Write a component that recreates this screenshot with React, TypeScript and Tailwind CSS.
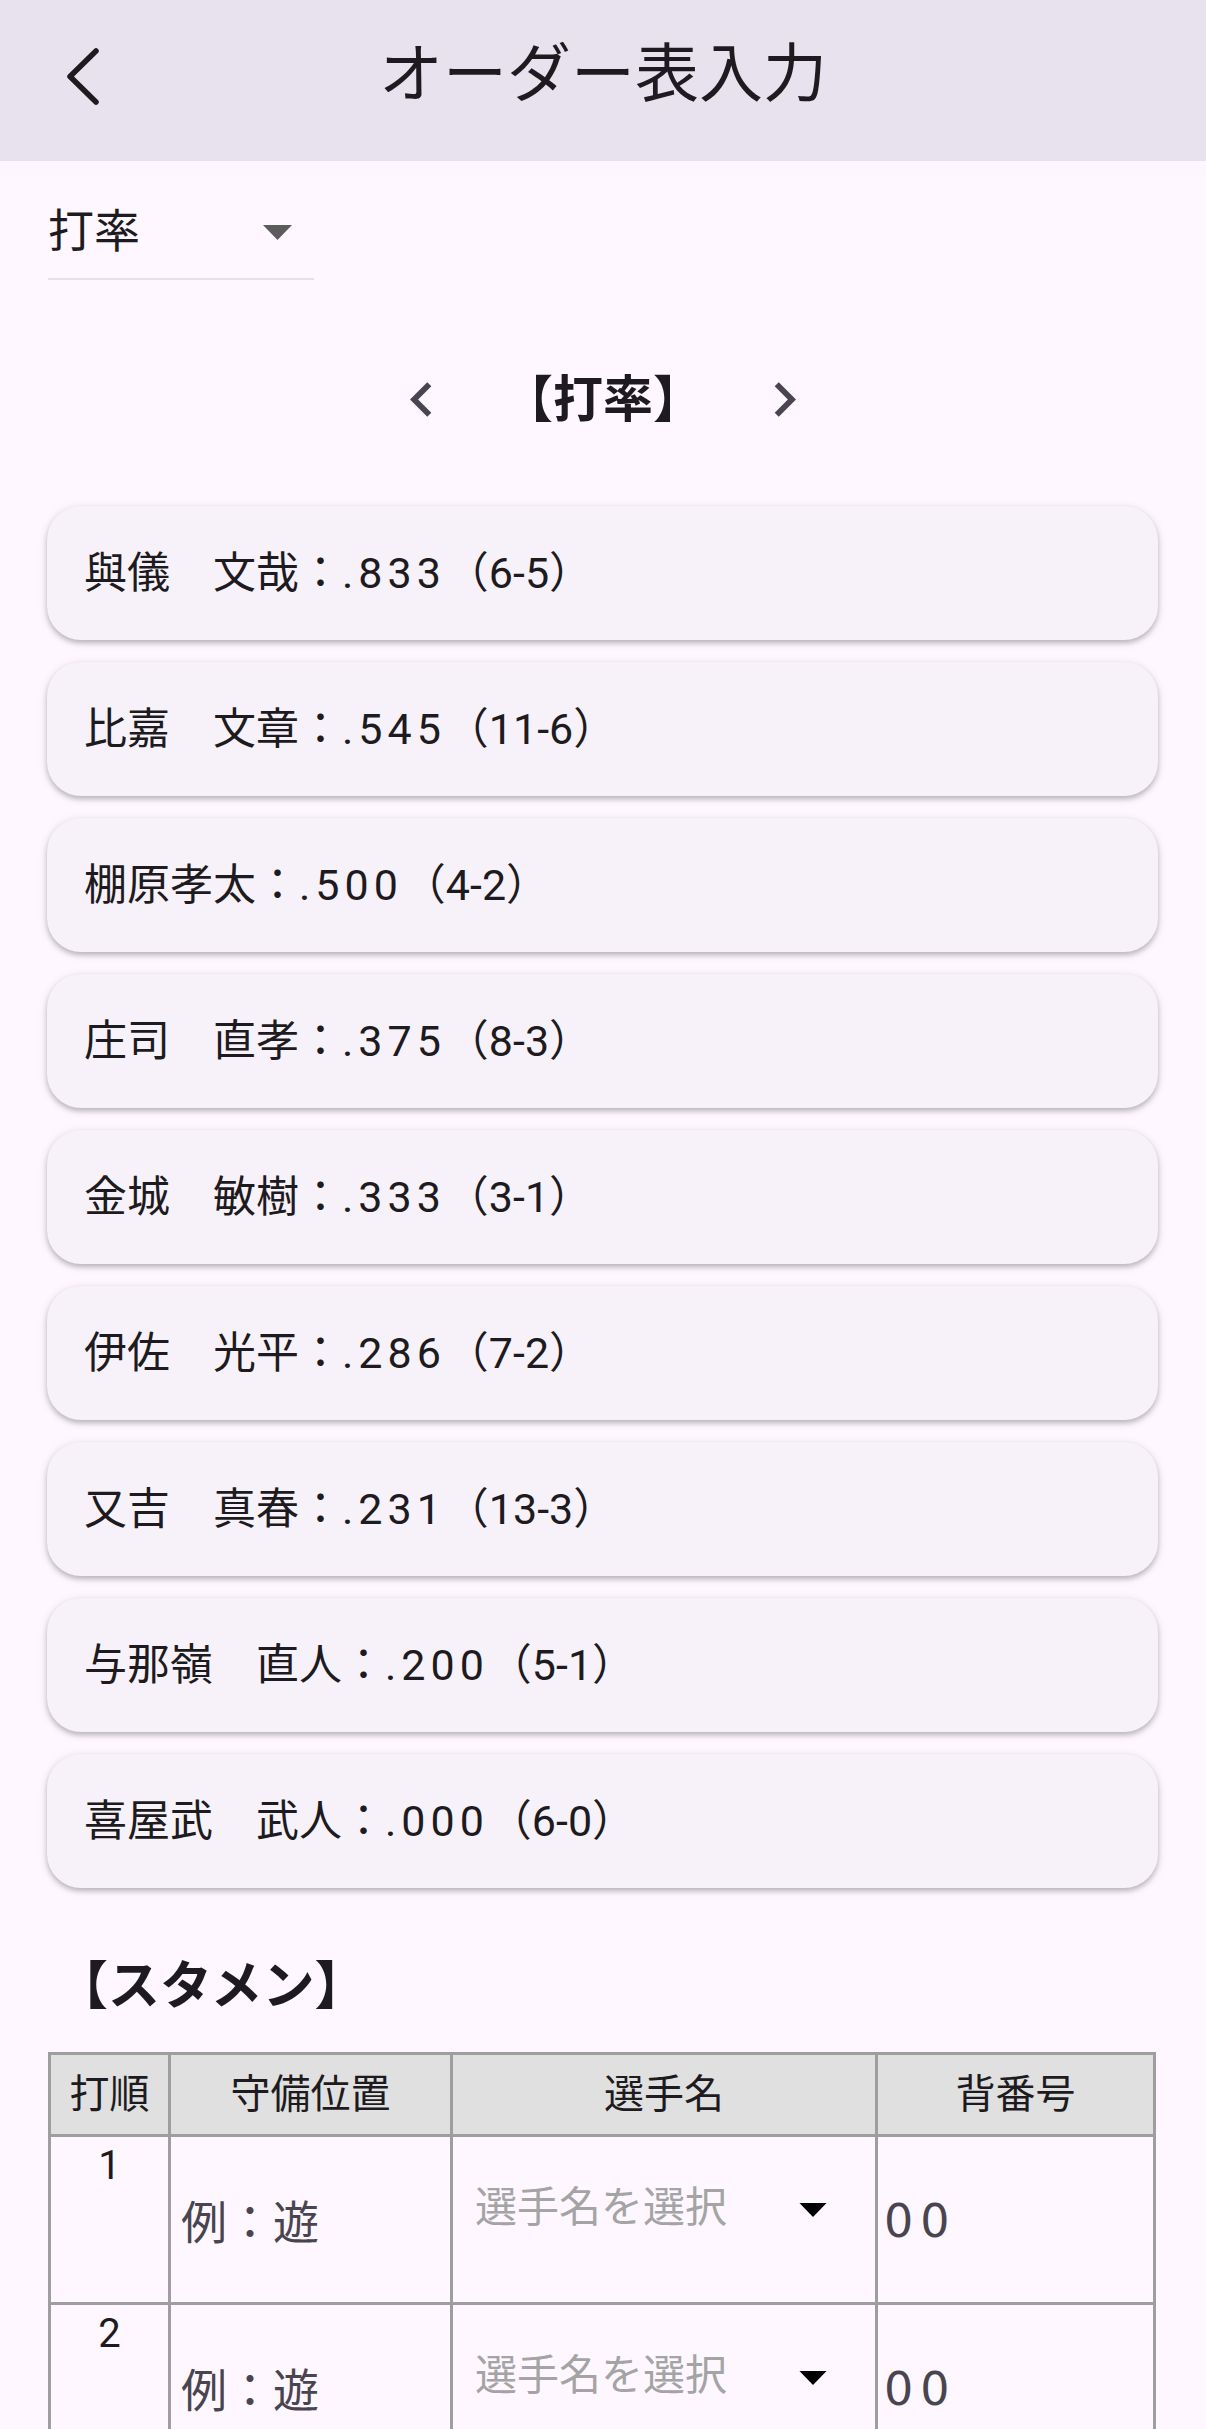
import React from "react";

const stats = [
    { name: "與儀　文哉", avg: ".833", ab: "（6-5）" },
    { name: "比嘉　文章", avg: ".545", ab: "（11-6）" },
    { name: "棚原孝太", avg: ".500", ab: "（4-2）" },
    { name: "庄司　直孝", avg: ".375", ab: "（8-3）" },
    { name: "金城　敏樹", avg: ".333", ab: "（3-1）" },
    { name: "伊佐　光平", avg: ".286", ab: "（7-2）" },
    { name: "又吉　真春", avg: ".231", ab: "（13-3）" },
    { name: "与那嶺　直人", avg: ".200", ab: "（5-1）" },
    { name: "喜屋武　武人", avg: ".000", ab: "（6-0）" },
];

function Triangle({ className }: { className: string }) {
    return (
        <svg width="29" height="15" viewBox="0 0 29 15" className={className}>
            <polygon points="0,0 29,0 14.5,15" fill="currentColor" />
        </svg>
    );
}

function OrderRow({ no }: { no: number }) {
    return (
        <div className="grid grid-cols-[120px_282px_425px_1fr] h-[168px] border-b-[3px] border-[#9e9e9e]">
            <div className="border-r-[3px] border-[#9e9e9e] text-center pt-[9px] text-[40px] leading-none">
                {no}
            </div>
            <div className="border-r-[3px] border-[#9e9e9e] pl-[10px] pt-[63px] text-[46px] leading-none text-[#49454f]">
                例：遊
            </div>
            <div className="border-r-[3px] border-[#9e9e9e] pl-[22px] pr-[48px] pt-[50px] flex justify-between items-start">
                <span className="text-[42px] leading-none text-[#a4a4a4]">選手名を選択</span>
                <Triangle className="text-black mt-[16px] w-[28px] h-[14px]" />
            </div>
            <div className="pl-[6px] pt-[61px] text-[46px] leading-none text-[#49454f] tracking-[7px] font-['DejaVu_Sans',sans-serif]">
                00
            </div>
        </div>
    );
}

export default function App() {
    return (
        <div className="min-h-screen bg-[#fef7ff] text-[#1d1b20] font-['Roboto','Noto_Sans_CJK_JP',sans-serif]">
            <header className="h-[161px] bg-[#e8e1ee] grid grid-cols-[1fr_auto_1fr] items-center pb-[8px]">
                <div className="pl-[66px]">
                    <svg width="34" height="57" viewBox="0 0 34 57">
                        <path
                            d="M30 3 L4 28.5 L30 54"
                            fill="none"
                            stroke="#1d1b20"
                            strokeWidth="5.5"
                            strokeLinecap="round"
                            strokeLinejoin="round"
                        />
                    </svg>
                </div>
                <h1 className="text-[64px] leading-none mb-[4px]">オーダー表入力</h1>
                <div />
            </header>

            <div className="px-[48px]">
                <div className="mt-[47px] w-[266px] pb-[24px] border-b-2 border-[#e6e0e9] flex items-center justify-between pr-[22px]">
                    <span className="text-[46px] leading-none">打率</span>
                    <Triangle className="text-[#5c5c5c] mt-[2px]" />
                </div>

                <div className="mt-[85px] flex items-center justify-center gap-[47px]">
                    <svg width="69" height="69" viewBox="0 0 24 24" className="text-[#49454f]">
                        <path fill="currentColor" d="M15.41 7.41L14 6l-6 6 6 6 1.41-1.41L10.83 12z" />
                    </svg>
                    <h2 className="text-[50px] leading-none font-bold">【打率】</h2>
                    <svg width="69" height="69" viewBox="0 0 24 24" className="text-[#49454f]">
                        <path fill="currentColor" d="M10 6L8.59 7.41 13.17 12l-4.58 4.59L10 18l6-6z" />
                    </svg>
                </div>

                <div className="mt-[72px] flex flex-col gap-[22px] -ml-[1px]">
                    {stats.map((s) => (
                        <div
                            key={s.name}
                            className="h-[134px] rounded-[34px] bg-[#f7f2fa] flex items-center pl-[37px] shadow-[0_3px_5px_rgba(0,0,0,0.22),0_2px_8px_2px_rgba(0,0,0,0.07)]"
                        >
                            <span className="text-[43px] leading-none">
                                {s.name}：<span className="tracking-[5px]">{s.avg}</span>
                                {s.ab}
                            </span>
                        </div>
                    ))}
                </div>

                <h2 className="mt-[73px] text-[52px] leading-none font-bold pl-[8px]">【スタメン】</h2>

                <div className="mt-[39px] mr-[2px] border-x-[3px] border-t-[3px] border-[#9e9e9e]">
                    <div className="grid grid-cols-[120px_282px_425px_1fr] h-[82px] bg-[#e0e0e0] border-b-[3px] border-[#9e9e9e] text-[40px] leading-none">
                        <div className="border-r-[3px] border-[#9e9e9e] flex items-center justify-center">打順</div>
                        <div className="border-r-[3px] border-[#9e9e9e] flex items-center justify-center">守備位置</div>
                        <div className="border-r-[3px] border-[#9e9e9e] flex items-center justify-center">選手名</div>
                        <div className="flex items-center justify-center">背番号</div>
                    </div>
                    <OrderRow no={1} />
                    <OrderRow no={2} />
                </div>
            </div>
        </div>
    );
}
